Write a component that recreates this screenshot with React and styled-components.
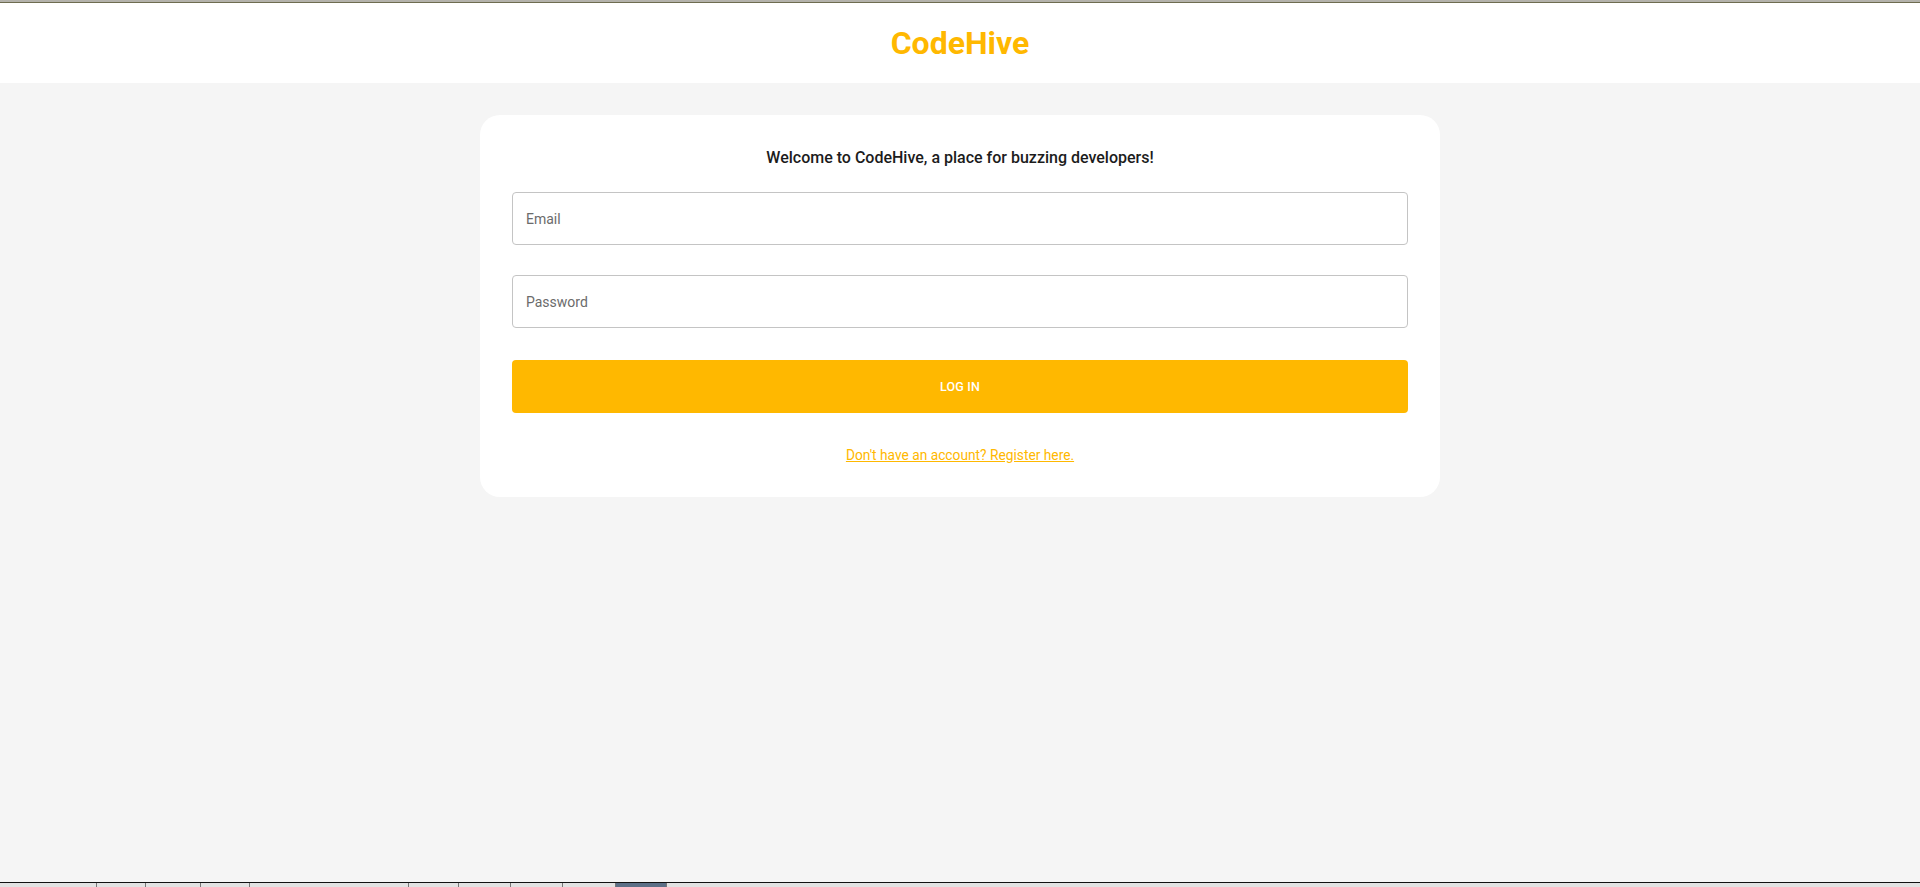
import React from 'react';
import styled, { createGlobalStyle } from 'styled-components';

const GlobalStyle = createGlobalStyle`
  html, body {
    margin: 0;
    padding: 0;
    height: 100%;
  }
  body {
    font-family: Roboto, "Liberation Sans", sans-serif;
    background: #f5f5f5;
  }
  #root {
    height: 100%;
  }
`;

const Page = styled.div`
  height: 887px;
  display: flex;
  flex-direction: column;
  background: #f5f5f5;
  border-top: 2px solid #b4b2ab;
  box-sizing: border-box;
`;

const Header = styled.header`
  height: 80px;
  background: #ffffff;
  border-top: 1px solid #6e6c50;
  display: flex;
  align-items: center;
  justify-content: center;
`;

const Brand = styled.h1`
  margin: 0;
  font-size: 32px;
  font-weight: 700;
  color: #ffb800;
`;

const Main = styled.main`
  flex: 1;
  display: flex;
  justify-content: center;
  align-items: flex-start;
  padding-top: 32px;
`;

const Card = styled.form`
  width: 960px;
  box-sizing: border-box;
  background: #ffffff;
  border-radius: 20px;
  padding: 32px;
  display: flex;
  flex-direction: column;
`;

const Welcome = styled.p`
  margin: 0 0 23px;
  text-align: center;
  font-size: 16px;
  line-height: 22px;
  font-weight: 500;
  color: #1c1c1c;
`;

const Input = styled.input`
  height: 53px;
  box-sizing: border-box;
  border: 1px solid #c4c4c4;
  border-radius: 4px;
  padding: 0 13px;
  font-family: Roboto, "Liberation Sans", sans-serif;
  font-size: 14px;
  color: #333;
  margin-bottom: ${p => p.$gap || 30}px;
  outline: none;

  &::placeholder {
    color: #6b6b6b;
  }
`;

const Button = styled.button`
  height: 53px;
  border: none;
  border-radius: 4px;
  background: #ffb800;
  color: #ffffff;
  font-family: Roboto, "Liberation Sans", sans-serif;
  font-size: 12.5px;
  font-weight: 500;
  text-transform: uppercase;
  letter-spacing: 0.2px;
  cursor: pointer;
`;

const LinkRow = styled.div`
  margin-top: 32px;
  text-align: center;
  line-height: 20px;
`;

const RegisterLink = styled.a`
  font-size: 13.75px;
  color: #ffb800;
  text-decoration: underline;
`;

const Taskbar = styled.div`
  height: 4px;
  border-top: 1px solid #111;
  background: #e2e2e2;
  display: flex;
`;

const TaskSlot = styled.div`
  width: ${p => p.$w}px;
  border-right: 1px solid #777;
  background: ${p => (p.$active ? '#5c6f86' : '#e2e2e2')};
`;

const slots = [
  { w: 96 }, { w: 48 }, { w: 54 }, { w: 48 }, { w: 158 },
  { w: 49 }, { w: 51 }, { w: 51 }, { w: 52 }, { w: 50, active: true },
];

export default function App() {
  return (
    <>
      <GlobalStyle />
      <Page>
        <Header>
          <Brand>CodeHive</Brand>
        </Header>
        <Main>
          <Card onSubmit={e => e.preventDefault()}>
            <Welcome>Welcome to CodeHive, a place for buzzing developers!</Welcome>
            <Input type="email" placeholder="Email" />
            <Input type="password" placeholder="Password" $gap={32} />
            <Button type="submit">Log in</Button>
            <LinkRow>
              <RegisterLink href="#">Don't have an account? Register here.</RegisterLink>
            </LinkRow>
          </Card>
        </Main>
        <Taskbar>
          {slots.map((s, i) => (
            <TaskSlot key={i} $w={s.w} $active={s.active} />
          ))}
        </Taskbar>
      </Page>
    </>
  );
}
